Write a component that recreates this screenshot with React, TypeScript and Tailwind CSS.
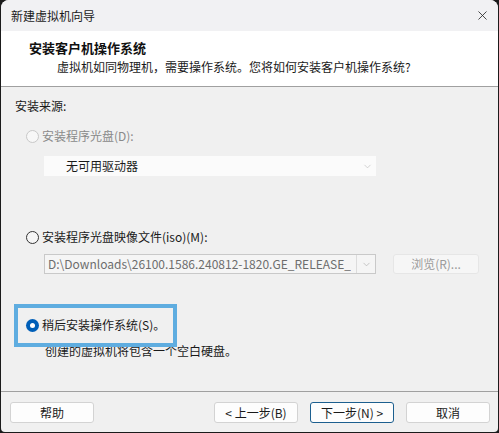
import { X, ChevronDown } from 'lucide-react';

const FONT = { fontFamily: '"Noto Sans CJK SC", "Noto Sans", sans-serif' };

function Radio({ state }: { state: 'disabled' | 'off' | 'on' }) {
  if (state === 'on') {
    return (
      <span className="w-[13px] h-[13px] rounded-full bg-[#005fb8] flex items-center justify-center shrink-0">
        <span className="w-[5px] h-[5px] rounded-full bg-white" />
      </span>
    );
  }
  return (
    <span
      className={`w-[13px] h-[13px] rounded-full border shrink-0 ${
        state === 'disabled' ? 'border-[#c8c8c8] bg-[#f7f7f7]' : 'border-[#333] bg-[#f5f5f5]'
      }`}
    />
  );
}

function Btn({ label, focused }: { label: string; focused?: boolean }) {
  return (
    <button
      className={`w-[84px] h-[21px] rounded-[3px] bg-[#fdfdfd] text-[12px] text-[#1a1a1a] flex items-center justify-center border ${
        focused ? 'border-[#1c5f8f]' : 'border-[#d3d3d3]'
      }`}
    >
      {label}
    </button>
  );
}

export default function App() {
  return (
    <div className="w-[499px] h-[433px] bg-[#1b1b1b] overflow-hidden" style={FONT}>
      <div className="h-[432px] mx-px rounded-t-[8px] rounded-b-[4px] bg-[#f0f0f0] overflow-hidden flex flex-col">
        {/* title bar */}
        <div className="h-[31px] bg-[#f1f1f3] flex items-center justify-between pl-[10px] pr-[8px] shrink-0">
          <span className="text-[12px] text-[#1a1a1a] leading-none">新建虚拟机向导</span>
          <X className="w-[15px] h-[15px] text-[#222]" strokeWidth={1.3} />
        </div>

        {/* header */}
        <div className="h-[56px] bg-white border-b border-[#a0a0a0] shrink-0 pt-[8px]">
          <div className="pl-[28px] text-[13px] font-bold text-[#111] leading-[18px]">安装客户机操作系统</div>
          <div className="pl-[56px] text-[12px] text-[#1a1a1a] leading-[18px] mt-[1px]">
            虚拟机如同物理机，需要操作系统。您将如何安装客户机操作系统?
          </div>
        </div>

        {/* body */}
        <div className="flex-1 relative pl-[14px] pt-[10px] text-[12px] text-[#1a1a1a]">
          <div className="leading-[18px]">安装来源:</div>

          <div className="flex items-center gap-[3px] pl-[11px] mt-[12px] h-[18px] text-[#8a8a8a]">
            <Radio state="disabled" />
            <span>安装程序光盘(D):</span>
          </div>
          <div className="ml-[29px] mt-[11px] w-[332px] h-[20px] bg-[#fbfbfb] flex items-center justify-between pl-[22px] pr-[3px]">
            <span className="text-[#1a1a1a]">无可用驱动器</span>
            <ChevronDown className="w-[11px] h-[11px] text-[#c0c0c0]" strokeWidth={1.5} />
          </div>

          <div className="flex items-center gap-[3px] pl-[11px] mt-[52px] h-[18px]">
            <Radio state="off" />
            <span>安装程序光盘映像文件(iso)(M):</span>
          </div>
          <div className="flex items-center mt-[8px]">
            <div className="ml-[29px] w-[332px] h-[20px] bg-[#f5f5f5] border border-[#c9c9c9] flex items-center justify-between pl-[3px] pr-[3px]">
              <span className="text-[#6d6d6d] whitespace-nowrap overflow-hidden">
                D:\Downloads\26100.1586.240812-1820.GE_RELEASE_
              </span>
              <span className="flex items-center h-full pl-[4px] border-l border-[#dcdcdc]">
                <ChevronDown className="w-[11px] h-[11px] text-[#b0b0b0]" strokeWidth={1.5} />
              </span>
            </div>
            <div className="ml-[17px] w-[86px] h-[20px] rounded-[3px] bg-[#f6f6f6] border border-[#e6e6e6] text-[#9a9a9a] flex items-center justify-center">
              浏览(R)...
            </div>
          </div>

          <div className="flex items-center gap-[3px] pl-[11px] mt-[42px] h-[18px]">
            <Radio state="on" />
            <span>稍后安装操作系统(S)。</span>
          </div>
          <div className="pl-[30px] mt-[9px] leading-[16px]">创建的虚拟机将包含一个空白硬盘。</div>

          {/* highlight annotation */}
          <div className="absolute left-[13px] top-[217px] w-[163px] h-[43px] border-[4px] border-[#5fade0] pointer-events-none" />
        </div>

        {/* footer */}
        <div className="h-[41px] border-t border-[#a0a0a0] shrink-0 flex items-center pl-[9px] pr-[8px] pt-[1px]">
          <Btn label="帮助" />
          <div className="ml-auto flex items-center gap-[12px]">
            <Btn label="< 上一步(B)" />
            <Btn label="下一步(N) >" focused />
            <Btn label="取消" />
          </div>
        </div>
      </div>
    </div>
  );
}
